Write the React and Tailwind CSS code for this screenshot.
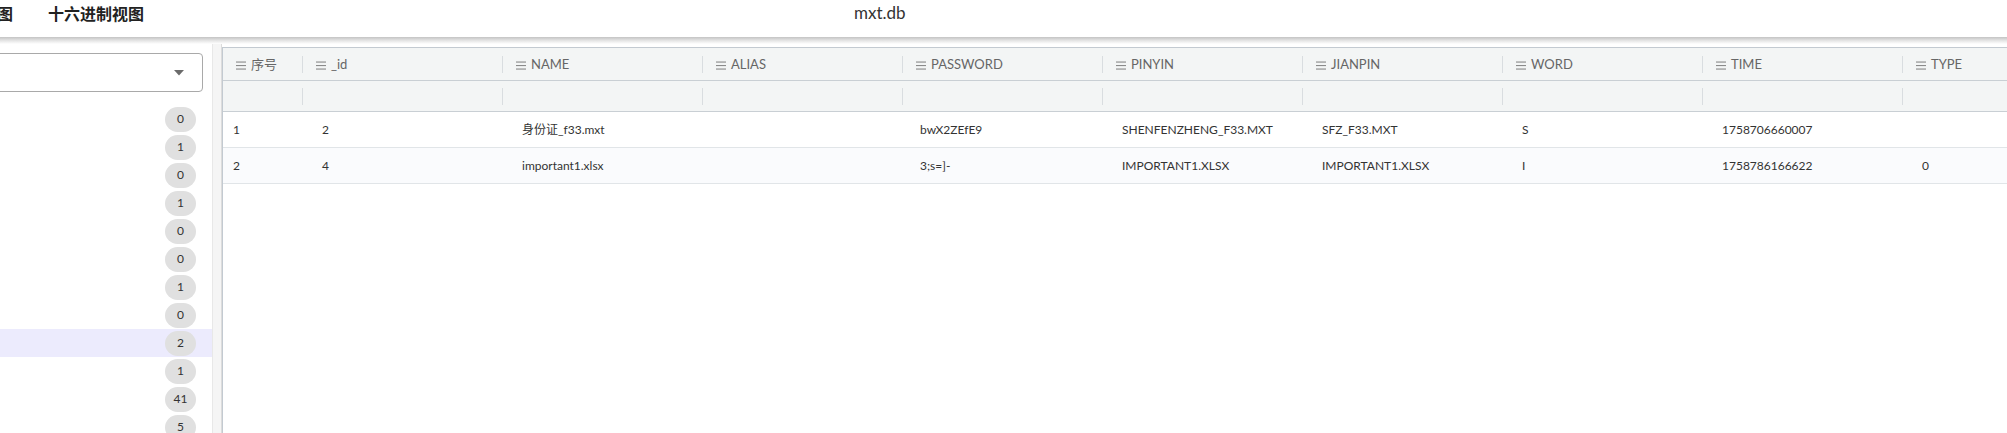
import React from 'react';

const columns = [
  { key: 'idx', label: '序号', width: 'w-[80px]', cell: 'pl-[10px]' },
  { key: '_id', label: '_id', width: 'w-[200px]', cell: 'pl-[19px]' },
  { key: 'NAME', label: 'NAME', width: 'w-[200px]', cell: 'pl-[19px]' },
  { key: 'ALIAS', label: 'ALIAS', width: 'w-[200px]', cell: 'pl-[19px]' },
  { key: 'PASSWORD', label: 'PASSWORD', width: 'w-[200px]', cell: 'pl-[17px]' },
  { key: 'PINYIN', label: 'PINYIN', width: 'w-[200px]', cell: 'pl-[19px]' },
  { key: 'JIANPIN', label: 'JIANPIN', width: 'w-[200px]', cell: 'pl-[19px]' },
  { key: 'WORD', label: 'WORD', width: 'w-[200px]', cell: 'pl-[19px]' },
  { key: 'TIME', label: 'TIME', width: 'w-[200px]', cell: 'pl-[19px]' },
  { key: 'TYPE', label: 'TYPE', width: 'w-[200px]', cell: 'pl-[19px]' },
];

const rows = [
  {
    idx: '1', _id: '2', NAME: '身份证_f33.mxt', ALIAS: '', PASSWORD: 'bwX2ZEfE9',
    PINYIN: 'SHENFENZHENG_F33.MXT', JIANPIN: 'SFZ_F33.MXT', WORD: 'S', TIME: '1758706660007', TYPE: '',
  },
  {
    idx: '2', _id: '4', NAME: 'important1.xlsx', ALIAS: '', PASSWORD: '3;s=]-',
    PINYIN: 'IMPORTANT1.XLSX', JIANPIN: 'IMPORTANT1.XLSX', WORD: 'I', TIME: '1758786166622', TYPE: '0',
  },
];

const counts = ['0', '1', '0', '1', '0', '0', '1', '0', '2', '1', '41', '5'];

const MenuIcon = () => (
  <svg width="10" height="9" viewBox="0 0 10 9" className="shrink-0">
    <rect x="0" y="0.5" width="10" height="1.1" fill="#8a8a8a" />
    <rect x="0" y="4" width="10" height="1.1" fill="#8a8a8a" />
    <rect x="0" y="7.5" width="10" height="1.1" fill="#8a8a8a" />
  </svg>
);

const App = () => {
  return (
    <div className="w-[2007px] h-[433px] overflow-hidden bg-white text-[#333] font-['Lato','Noto_Sans_CJK_SC',sans-serif]">
      {/* Top bar */}
      <div className="h-[37px] flex items-center pb-[12px] whitespace-nowrap">
        <span className="ml-[-3px] text-[16px] font-semibold text-[#222] font-['Noto_Sans_CJK_SC',sans-serif]">图</span>
        <span className="ml-[35px] text-[16px] font-semibold text-[#222] font-['Noto_Sans_CJK_SC',sans-serif]">十六进制视图</span>
        <span className="ml-[710px] text-[17px] text-[#333]">mxt.db</span>
      </div>
      <div className="h-[7px] bg-gradient-to-b from-[#c4c4c4] via-[#e4e4e4] to-white" />

      <div className="flex">
        {/* Sidebar */}
        <div className="w-[212px] shrink-0">
          <div className="mt-[9px] ml-[-12px] mr-[9px] h-[39px] border border-[#a9a9a9] rounded-[4px] flex items-center justify-end pr-[18px]">
            <svg width="10" height="6" viewBox="0 0 10 6">
              <path d="M0 0 L10 0 L5 5.5 Z" fill="#6b6b6b" />
            </svg>
          </div>
          <div className="mt-[13px]">
            {counts.map((c, i) => (
              <div
                key={i}
                className={`h-[28px] flex items-center justify-end pr-[16px] ${i === 8 ? 'bg-[#ecebfd]' : ''}`}
              >
                <span className="h-[25px] min-w-[31px] px-[8px] rounded-full bg-[#e0e0e0] text-[12px] text-[#333] flex items-center justify-center">
                  {c}
                </span>
              </div>
            ))}
          </div>
        </div>

        {/* Splitter */}
        <div className="w-[10px] shrink-0 h-[400px] bg-[#f5f5f5] border-l border-[#e8e8e8] border-r border-r-[#dcdcdc]" />

        {/* Table */}
        <div className="mt-[3px] border-l border-t border-[#c3cad1] flex-1 min-w-0">
          <div className="flex h-[33px] bg-[#f3f5f5] border-b border-[#c9cfd4]">
            {columns.map((col) => (
              <div key={col.key} className={`${col.width} shrink-0 flex items-center justify-between`}>
                <div className="flex items-center gap-[5px] pl-[13px] pt-[2px] text-[13px] text-[#666]">
                  <MenuIcon />
                  <span>{col.label}</span>
                </div>
                <div className="w-px h-[17px] bg-[#d9dde0]" />
              </div>
            ))}
          </div>
          <div className="flex h-[31px] bg-[#f3f5f5] border-b border-[#c9cfd4]">
            {columns.map((col) => (
              <div key={col.key} className={`${col.width} shrink-0 flex items-center justify-end`}>
                <div className="w-px h-[17px] bg-[#d9dde0]" />
              </div>
            ))}
          </div>
          {rows.map((row, r) => (
            <div
              key={r}
              className={`flex h-[36px] border-b border-[#e1e5e8] ${r % 2 === 1 ? 'bg-[#fafbfd]' : 'bg-white'}`}
            >
              {columns.map((col) => (
                <div
                  key={col.key}
                  className={`${col.width} ${col.cell} shrink-0 flex items-center pt-[1px] text-[12px] text-[#333] whitespace-nowrap`}
                >
                  {row[col.key]}
                </div>
              ))}
            </div>
          ))}
        </div>
      </div>
    </div>
  );
};

export default App;
